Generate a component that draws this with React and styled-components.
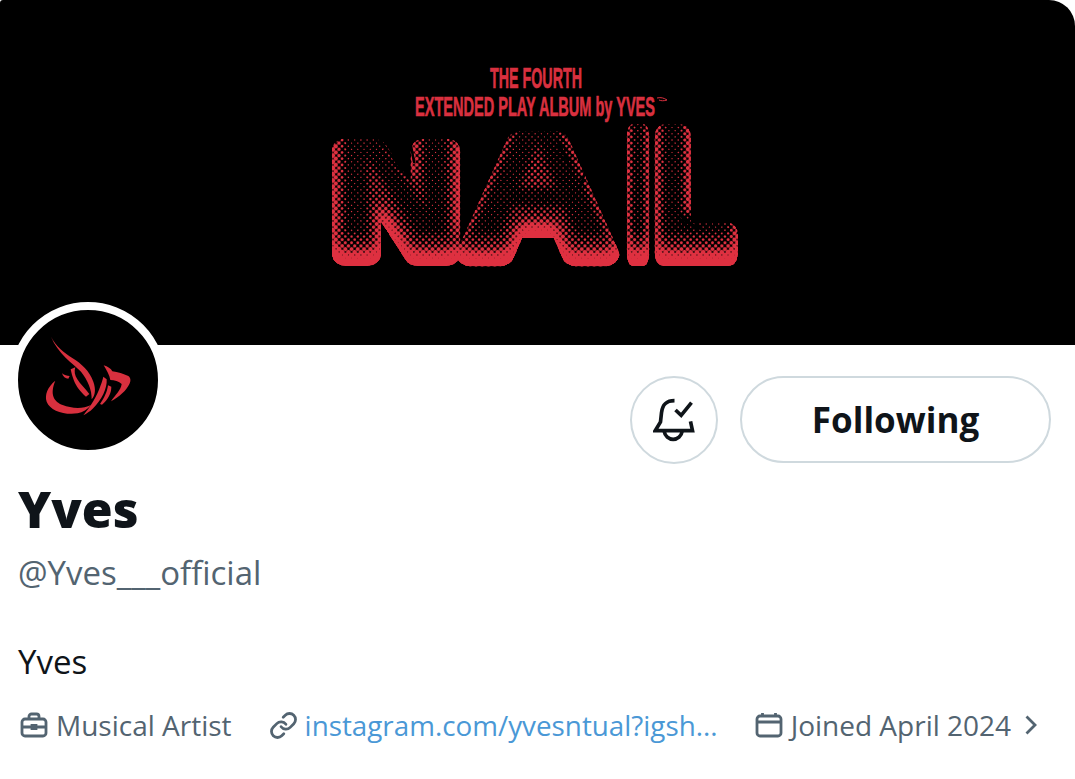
import styled, { createGlobalStyle } from "styled-components";
import { Link as LinkIcon } from "lucide-react";

const GlobalStyle = createGlobalStyle`
  html, body {
    margin: 0;
    padding: 0;
    background: #fff;
  }
  body {
    font-family: "Open Sans", "Noto Sans", sans-serif;
    color: #0f1419;
  }
`;

// grey artwork + dot screen, thresholded into red halftone by the #halftone filter
function AlbumArt() {
  return (
    <ArtSvg viewBox="0 0 1075 345">
      <defs>
        <g id="nailWord">
          <text x="334" y="254" fontSize="150" textLength="124" lengthAdjust="spacingAndGlyphs">N</text>
          <text x="466" y="254" fontSize="162" textLength="144" lengthAdjust="spacingAndGlyphs">A</text>
          <text x="627" y="254" fontSize="170" textLength="22" lengthAdjust="spacingAndGlyphs">I</text>
          <text x="655" y="254" fontSize="170" textLength="78" lengthAdjust="spacingAndGlyphs">L</text>
        </g>
        <mask id="nailMask" maskUnits="userSpaceOnUse" x="300" y="100" width="470" height="190">
          <use href="#nailWord" fill="#fff" stroke="#fff" strokeWidth="24" strokeLinejoin="round" />
        </mask>
        <filter id="soft" x="-20%" y="-20%" width="140%" height="140%">
          <feGaussianBlur stdDeviation="6" />
        </filter>
        <filter id="softer" x="-20%" y="-20%" width="140%" height="140%">
          <feGaussianBlur stdDeviation="3" />
        </filter>
        <filter id="halftone" colorInterpolationFilters="sRGB" x="0" y="0" width="100%" height="100%">
          <feComponentTransfer>
            <feFuncR type="linear" slope="6" intercept="-2.5" />
            <feFuncG type="linear" slope="6" intercept="-2.5" />
            <feFuncB type="linear" slope="6" intercept="-2.5" />
          </feComponentTransfer>
          <feColorMatrix values="0.87 0 0 0 0  0.19 0 0 0 0  0.25 0 0 0 0  0 0 0 1 0" />
          <feGaussianBlur stdDeviation="0.55" />
        </filter>
        <radialGradient id="dot">
          <stop offset="0" stopColor="#fff" />
          <stop offset="1" stopColor="#000" />
        </radialGradient>
        <pattern id="screen" width="4.4" height="4.4" patternUnits="userSpaceOnUse" patternTransform="rotate(45)">
          <rect width="4.4" height="4.4" fill="#000" />
          <circle cx="2.2" cy="2.2" r="3.11" fill="url(#dot)" />
        </pattern>
      </defs>
      <ArtTitle x="536" y="88" fontSize="29" textLength="92" lengthAdjust="spacingAndGlyphs" textAnchor="middle">
        THE FOURTH
      </ArtTitle>
      <ArtTitle x="535" y="116" fontSize="28" textLength="240" lengthAdjust="spacingAndGlyphs" textAnchor="middle">
        EXTENDED PLAY ALBUM by YVES
      </ArtTitle>
      <path d="M657 98c4-1 7 0 10 2-3 1-6 1-8 0" fill="none" stroke="#d9303f" strokeWidth="1" />
      <g mask="url(#nailMask)">
        <g filter="url(#halftone)">
          <rect x="310" y="110" width="450" height="170" fill="#000" />
          <use href="#nailWord" fill="#fff" stroke="#fff" strokeWidth="24" strokeLinejoin="round" />
          <use
            href="#nailWord"
            transform="translate(0 -12)"
            fill="#707070"
            stroke="#707070"
            strokeWidth="20"
            strokeLinejoin="round"
            filter="url(#soft)"
          />
          <use href="#nailWord" transform="translate(0 -20)" fill="#282828" filter="url(#softer)" opacity="0.8" />
          <rect x="310" y="110" width="450" height="170" fill="url(#screen)" opacity="0.5" />
        </g>
        <g fill="none" stroke="#000" strokeWidth="2.500" strokeLinecap="round">
          <path d="M380 140l22 30M396 146l12 18M410 140l4 22M476 176l-10 40M557 140l14 28M592 150l-12 38M672 204l14 18l18 8" />
        </g>
      </g>
    </ArtSvg>
  );
}

function AvatarMark() {
  return (
    <svg width="140" height="140" viewBox="-54 -60 420 420">
      <g fill="#d8303e">
        <path d="M45 20c15 30 40 48 65 65 25 15 52 40 62 70 8 23 6 40-5 53 1-28-12-58-32-83C110 100 65 70 45 20z" />
        <path d="M58 152c-23 18-33 43-26 63 10 27 53 41 93 35 15-3 30-12 40-25-25 13-60 10-85 0-25-10-40-30-22-73z" />
        <path d="M78 130c7 6 15 8 23 8l-4 8c-9 0-16-6-19-16z" />
        <path d="M104 118l14-6c-4 12-2 24 6 36 8 14 24 28 36 44l-10 8c-16-14-30-32-36-48-5-12-8-24-10-34z" />
        <path d="M203 106c12 4 22 10 26 18 16 2 34 8 48 14 8 6 8 16 2 26-8 16-28 36-54 50 12-18 30-34 32-52-8-8-22-12-34-12-2-14-12-30-20-44z" />
        <path d="M202 140l10 8c2 26-14 62-42 88-8 8-18 14-28 20 20-24 42-58 52-90 4-10 6-18 8-26z" />
        <path d="M216 166l10 4c0 20-10 38-28 54l-6-2c12-16 22-38 24-56z" />
      </g>
    </svg>
  );
}

function BellCheck() {
  return (
    <svg width="42" height="45" viewBox="100 95 125 135" fill="none" stroke="#0f1419" strokeWidth="11">
      <path d="M164 106c-26 0-36 12-39 36l-3 28-16 26h112l-6-28" />
      <path d="M133 198c2 14 14 24 27 24s25-10 27-24" />
      <path d="M167 134l17 16 31-38" />
    </svg>
  );
}

function Briefcase() {
  return (
    <MetaIcon viewBox="0 0 28 28">
      <path d="M5 8h18a3 3 0 0 1 3 3v11a3 3 0 0 1-3 3H5a3 3 0 0 1-3-3V11a3 3 0 0 1 3-3z" />
      <path d="M9 8V5.500A2.500 2.500 0 0 1 11.500 3h5A2.500 2.500 0 0 1 19 5.500V8" />
      <path d="M2 16h10M16 16h10M12 14.500h4v3h-4z" />
    </MetaIcon>
  );
}

function CalendarIcon() {
  return (
    <MetaIcon viewBox="0 0 28 28">
      <path d="M5 5h18a3 3 0 0 1 3 3v14a3 3 0 0 1-3 3H5a3 3 0 0 1-3-3V8a3 3 0 0 1 3-3z" />
      <path d="M2 11h24M7.500 2v4M20.500 2v4" />
    </MetaIcon>
  );
}

export default function App() {
  return (
    <>
      <GlobalStyle />
      <Page>
        <Banner>
          <AlbumArt />
        </Banner>
        <Avatar>
          <AvatarMark />
        </Avatar>
        <Profile>
          <Actions>
            <BellButton>
              <BellCheck />
            </BellButton>
            <FollowButton>Following</FollowButton>
          </Actions>
          <Name>Yves</Name>
          <Handle>@Yves___official</Handle>
          <Bio>Yves</Bio>
          <Meta>
            <MetaItem>
              <Briefcase />
              Musical Artist
            </MetaItem>
            <MetaItem>
              <LinkIcon size={29} strokeWidth={2.3} />
              <MetaLink>instagram.com/yvesntual?igsh...</MetaLink>
            </MetaItem>
            <MetaItem>
              <CalendarIcon />
              Joined April 2024
              <Chevron viewBox="0 0 14 22">
                <path d="M2.500 2.500l8.500 8.500-8.500 8.500" />
              </Chevron>
            </MetaItem>
          </Meta>
        </Profile>
      </Page>
    </>
  );
}

const Page = styled.div`
  position: relative;
  width: 1075px;
  height: 779px;
  overflow: hidden;
  background: #fff;
`;

const Banner = styled.div`
  height: 345px;
  background: #000;
  border-radius: 3px 26px 0 0;
  overflow: hidden;
`;

const ArtSvg = styled.svg`
  display: block;
  width: 1075px;
  height: 345px;
  font-family: "Liberation Sans", Arial, sans-serif;
  font-weight: 700;
`;

const ArtTitle = styled.text`
  fill: #d9303f;
  stroke: #d9303f;
  stroke-width: 0.7;
`;

const Avatar = styled.div`
  position: absolute;
  left: 10px;
  top: 302px;
  width: 140px;
  height: 140px;
  border: 8px solid #fff;
  border-radius: 50%;
  background: #000;
  display: flex;
`;

const Profile = styled.div`
  display: flex;
  flex-direction: column;
  padding: 31px 24px 0 18px;
`;

const Actions = styled.div`
  display: flex;
  justify-content: flex-end;
  align-items: center;
  gap: 22px;
  height: 87px;
`;

const BellButton = styled.button`
  width: 88px;
  height: 88px;
  padding: 0;
  display: flex;
  align-items: center;
  justify-content: center;
  background: #fff;
  border: 2.500px solid #cfd9de;
  border-radius: 50%;
`;

const FollowButton = styled.button`
  width: 311px;
  height: 87px;
  padding: 0;
  background: #fff;
  border: 2.500px solid #cfd9de;
  border-radius: 44px;
  font-family: inherit;
  font-size: 35px;
  font-weight: 700;
  color: #0f1419;
`;

const Name = styled.h1`
  margin: 15px 0 0;
  font-size: 50px;
  line-height: 62px;
  font-weight: 800;
  color: #0f1419;
`;

const Handle = styled.div`
  margin-top: 11px;
  font-size: 33px;
  line-height: 44px;
  color: #536471;
`;

const Bio = styled.div`
  margin-top: 47px;
  font-size: 33px;
  line-height: 40px;
`;

const Meta = styled.div`
  display: flex;
  align-items: center;
  gap: 37px;
  margin-top: 24px;
  padding-left: 2px;
  font-size: 28px;
  line-height: 38px;
  color: #536471;
`;

const MetaItem = styled.div`
  display: flex;
  align-items: center;
  gap: 8px;
  white-space: nowrap;
`;

const MetaIcon = styled.svg`
  width: 28px;
  height: 28px;
  fill: none;
  stroke: #536471;
  stroke-width: 2.8;
  flex: none;
`;

const Chevron = styled.svg`
  width: 14px;
  height: 22px;
  margin-left: 5px;
  fill: none;
  stroke: #536471;
  stroke-width: 2.8;
  flex: none;
`;

const MetaLink = styled.span`
  margin-left: -1px;
  font-size: 27.800px;
  color: #4a98d6;
`;
